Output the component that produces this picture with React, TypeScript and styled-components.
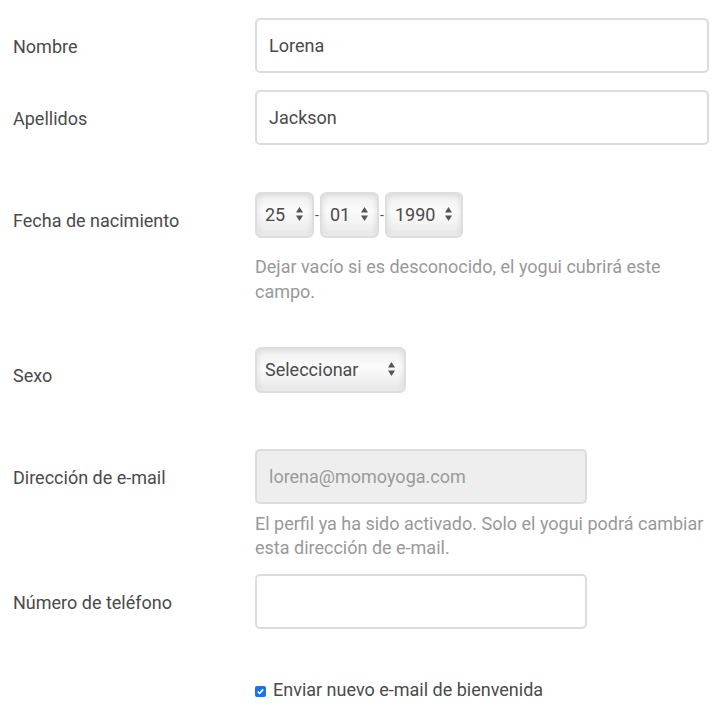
import React from "react";
import styled, { createGlobalStyle } from "styled-components";

const Global = createGlobalStyle`
  html, body { margin: 0; padding: 0; background: #fff; }
  body { font-family: Roboto, "Liberation Sans", sans-serif; font-size: 18px; color: #4a4a4a; }
`;

const Form = styled.div`
  padding: 18px 0 0 13px;
`;

const Row = styled.div<{ $mt?: number }>`
  display: grid;
  grid-template-columns: 242px 454px;
  margin-top: ${(p) => p.$mt ?? 0}px;
`;

const Label = styled.div`
  padding-top: 16px;
  line-height: 25px;
  color: #4a4a4a;
`;

const Field = styled.div`
  display: flex;
  flex-direction: column;
  align-items: flex-start;
`;

const TextInput = styled.div<{ $w?: number; $disabled?: boolean }>`
  box-sizing: border-box;
  width: ${(p) => p.$w ?? 454}px;
  height: 55px;
  border: 2px solid #dcdcdc;
  border-radius: 5px;
  background: ${(p) => (p.$disabled ? "#eeeeee" : "#fff")};
  color: ${(p) => (p.$disabled ? "#9a9a9a" : "#4a4a4a")};
  padding: 0 12px;
  display: flex;
  align-items: center;
  line-height: 24px;
`;

const Hint = styled.div<{ $mt: number; $lh: number }>`
  margin-top: ${(p) => p.$mt}px;
  line-height: ${(p) => p.$lh}px;
  color: #999;
  width: 454px;
`;

const SelectGroup = styled.div`
  display: flex;
  align-items: center;
`;

const Dash = styled.span`
  width: 6px;
  text-align: center;
  color: #555;
  font-size: 14px;
`;

const SelectBox = styled.div<{ $w: number }>`
  box-sizing: border-box;
  width: ${(p) => p.$w}px;
  height: 46px;
  border: 2px solid #dedede;
  border-radius: 6px;
  background: linear-gradient(#eeeeee, #fbfbfb 40%, #f6f6f6 60%, #e8e8e8);
  box-shadow: inset 0 0 6px rgba(0, 0, 0, 0.13), inset 0 -2px 3px rgba(255, 255, 255, 0.8);
  display: flex;
  align-items: center;
  justify-content: space-between;
  padding: 0 9px 2px 8px;
  color: #4a4a4a;
`;

const Check = styled.span`
  box-sizing: border-box;
  width: 11px;
  height: 11px;
  border-radius: 2px;
  background: #1a73e8;
  display: inline-flex;
  align-items: center;
  justify-content: center;
  margin-right: 7px;
  margin-top: 3px;
`;

const CheckRow = styled.label`
  display: flex;
  align-items: center;
  line-height: 24px;
  color: #4a4a4a;
`;

const Arrows = () => (
  <svg width="7" height="14" viewBox="0 0 7 14">
    <path d="M3.5 0 L7 5.5 L0 5.5 Z" fill="#555" />
    <path d="M0 8.5 L7 8.5 L3.5 14 Z" fill="#555" />
  </svg>
);

const Select = ({ w, value }: { w: number; value: string }) => (
  <SelectBox $w={w}>
    <span>{value}</span>
    <Arrows />
  </SelectBox>
);

export default function App() {
  return (
    <>
      <Global />
      <Form>
        <Row>
          <Label>Nombre</Label>
          <Field>
            <TextInput>Lorena</TextInput>
          </Field>
        </Row>
        <Row $mt={17}>
          <Label>Apellidos</Label>
          <Field>
            <TextInput>Jackson</TextInput>
          </Field>
        </Row>
        <Row $mt={47}>
          <Label>Fecha de nacimiento</Label>
          <Field>
            <SelectGroup>
              <Select w={59} value="25" />
              <Dash>-</Dash>
              <Select w={59} value="01" />
              <Dash>-</Dash>
              <Select w={78} value="1990" />
            </SelectGroup>
            <Hint $mt={16} $lh={25}>
              Dejar vacío si es desconocido, el yogui cubrirá este campo.
            </Hint>
          </Field>
        </Row>
        <Row $mt={43}>
          <Label>Sexo</Label>
          <Field>
            <Select w={151} value="Seleccionar" />
          </Field>
        </Row>
        <Row $mt={56}>
          <Label>Dirección de e-mail</Label>
          <Field>
            <TextInput $w={332} $disabled>
              lorena@momoyoga.com
            </TextInput>
            <Hint $mt={8} $lh={24}>
              El perfil ya ha sido activado. Solo el yogui podrá cambiar esta dirección de e-mail.
            </Hint>
          </Field>
        </Row>
        <Row $mt={14}>
          <Label>Número de teléfono</Label>
          <Field>
            <TextInput $w={332} />
          </Field>
        </Row>
        <Row $mt={49}>
          <span />
          <CheckRow>
            <Check>
              <svg width="9" height="9" viewBox="0 0 9 9">
                <path d="M1.8 4.6 L3.7 6.4 L7.2 2.4" stroke="#fff" strokeWidth="1.6" fill="none" />
              </svg>
            </Check>
            Enviar nuevo e-mail de bienvenida
          </CheckRow>
        </Row>
      </Form>
    </>
  );
}
